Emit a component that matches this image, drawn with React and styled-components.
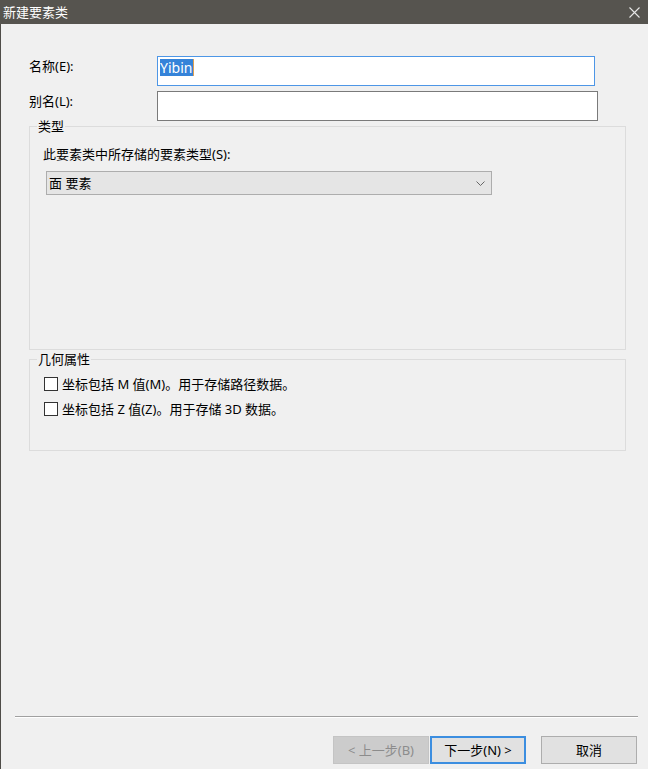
import React from "react";
import styled, { createGlobalStyle } from "styled-components";

const GlobalStyle = createGlobalStyle`
  html, body {
    margin: 0;
    padding: 0;
    background: #f0f0f0;
  }
  body {
    font-family: "Noto Sans", "Noto Sans CJK SC", sans-serif;
    font-size: 13px;
    color: #000;
  }
`;

const Window = styled.div`
  width: 648px;
  height: 769px;
  display: flex;
  flex-direction: column;
  background: #f0f0f0;
  overflow: hidden;
`;

const TitleBar = styled.div`
  height: 24px;
  flex: none;
  display: flex;
  align-items: center;
  justify-content: space-between;
  padding: 0 8px 0 3px;
  background: #56544f;
  color: #fff;
  line-height: 24px;
`;

const CloseIcon = styled.svg`
  width: 11px;
  height: 11px;
  display: block;
`;

const Content = styled.div`
  flex: 1;
  display: flex;
  flex-direction: column;
  border-left: 1px solid #4e4c48;
  min-height: 0;
`;

const Form = styled.div`
  flex: 1;
  padding: 32px 0 0 28px;
  display: flex;
  flex-direction: column;
`;

const FieldRow = styled.div`
  display: flex;
  align-items: flex-start;
  margin-top: ${(p) => p.$gap || 0}px;
`;

const Label = styled.div`
  width: 128px;
  line-height: 18px;
  padding-top: 1px;
`;

const TextBox = styled.div`
  box-sizing: border-box;
  width: ${(p) => p.$width}px;
  height: 30px;
  background: #fff;
  border: 1px solid ${(p) => (p.$focused ? "#4d96e6" : "#7a7a7a")};
  padding: 2px 0 0 2px;
  display: flex;
  align-items: flex-start;
`;

const Selected = styled.span`
  background: #3583d9;
  color: #fff;
  line-height: 17px;
  font-size: 14px;
  padding-right: 1px;
  border-right: 1px solid #e0a050;
`;

const Group = styled.div`
  position: relative;
  box-sizing: border-box;
  width: 597px;
  height: ${(p) => p.$height}px;
  margin-top: ${(p) => p.$gap}px;
  border: 1px solid #dcdcdc;
  padding: ${(p) => p.$pad};
  display: flex;
  flex-direction: column;
  align-items: flex-start;
`;

const Legend = styled.div`
  position: absolute;
  top: -9px;
  left: 7px;
  padding: 0 1px;
  background: #f0f0f0;
  line-height: 16px;
`;

const Description = styled.div`
  line-height: 18px;
  margin-left: -3px;
`;

const Select = styled.div`
  box-sizing: border-box;
  width: 446px;
  height: 24px;
  margin-top: 8px;
  background: #e5e5e5;
  border: 1px solid #adadad;
  display: flex;
  align-items: center;
  justify-content: space-between;
  padding: 0 6px 0 2px;
  line-height: 18px;
`;

const Chevron = styled.svg`
  width: 9px;
  height: 5px;
  display: block;
`;

const CheckRow = styled.label`
  display: flex;
  align-items: center;
  gap: 4px;
  line-height: 18px;
  margin-top: ${(p) => p.$gap || 0}px;
`;

const Box = styled.span`
  box-sizing: border-box;
  width: 14px;
  height: 14px;
  border: 1px solid #333;
  background: #fff;
  display: inline-block;
`;

const Footer = styled.div`
  flex: none;
  padding-bottom: 5px;
`;

const Separator = styled.div`
  width: 623px;
  margin-left: 14px;
  border-top: 1px solid #a0a0a0;
  border-bottom: 1px solid #fff;
`;

const ButtonRow = styled.div`
  display: flex;
  justify-content: flex-end;
  margin-top: 18px;
  padding-right: 11px;
`;

const Button = styled.div`
  box-sizing: border-box;
  width: 96px;
  height: 28px;
  margin-left: ${(p) => p.$gap || 0}px;
  display: flex;
  align-items: center;
  justify-content: center;
  line-height: 18px;
  background: ${(p) => (p.$disabled ? "#cccccc" : "#e1e1e1")};
  color: ${(p) => (p.$disabled ? "#8c8c8c" : "#000")};
  border: ${(p) =>
    p.$default
      ? "2px solid #3c8ee0"
      : p.$disabled
      ? "1px solid #c4c4c4"
      : "1px solid #adadad"};
`;

export default function App() {
  return (
    <>
      <GlobalStyle />
      <Window>
        <TitleBar>
          <span>新建要素类</span>
          <CloseIcon viewBox="0 0 11 11">
            <path d="M0.5 0.5 L10.5 10.5 M10.5 0.5 L0.5 10.5" stroke="#e6e6e6" strokeWidth="1.1" fill="none" />
          </CloseIcon>
        </TitleBar>
        <Content>
          <Form>
            <FieldRow>
              <Label>名称(E):</Label>
              <TextBox $width={438} $focused>
                <Selected>Yibin</Selected>
              </TextBox>
            </FieldRow>
            <FieldRow $gap={5}>
              <Label>别名(L):</Label>
              <TextBox $width={441} />
            </FieldRow>

            <Group $gap={5} $height={224} $pad="18px 0 0 16px">
              <Legend>类型</Legend>
              <Description>此要素类中所存储的要素类型(S):</Description>
              <Select>
                <span>面 要素</span>
                <Chevron viewBox="0 0 9 5">
                  <path d="M0.5 0.5 L4.5 4.5 L8.5 0.5" stroke="#666" strokeWidth="1" fill="none" />
                </Chevron>
              </Select>
            </Group>

            <Group $gap={9} $height={92} $pad="15px 0 0 14px">
              <Legend>几何属性</Legend>
              <CheckRow>
                <Box />
                <span>坐标包括 M 值(M)。用于存储路径数据。</span>
              </CheckRow>
              <CheckRow $gap={7}>
                <Box />
                <span>坐标包括 Z 值(Z)。用于存储 3D 数据。</span>
              </CheckRow>
            </Group>
          </Form>

          <Footer>
            <Separator />
            <ButtonRow>
              <Button $disabled>&lt; 上一步(B)</Button>
              <Button $default $gap={1}>下一步(N) &gt;</Button>
              <Button $gap={15}>取消</Button>
            </ButtonRow>
          </Footer>
        </Content>
      </Window>
    </>
  );
}
